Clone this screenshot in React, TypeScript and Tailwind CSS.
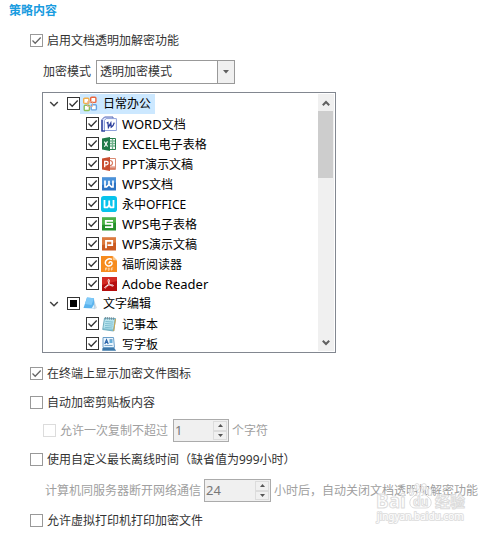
import { useState } from "react";
import type { ReactNode } from "react";
import { clsx } from "clsx";

type CheckboxTone = "form" | "tree";

type CheckboxProps = {
  readonly checked: boolean;
  readonly onChange?: (checked: boolean) => void;
  readonly label: ReactNode;
  readonly tone?: CheckboxTone;
  readonly partial?: boolean;
  readonly disabled?: boolean;
};

type TreeItem = {
  readonly id: string;
  readonly label: string;
  readonly prefix?: string;
  readonly icon: ReactNode;
};

type TreeGroup = TreeItem & {
  readonly partial?: boolean;
  readonly items: readonly TreeItem[];
};

const Icon = ({ children }: { readonly children: ReactNode }) => (
  <svg viewBox="0 0 16 16" className="h-4 w-4 shrink-0" aria-hidden="true">
    {children}
  </svg>
);

const OfficeIcon = () => (
  <Icon>
    <g fill="#fff" strokeWidth="1.4">
      <rect x="1.700" y="2.200" width="5.200" height="5.200" rx="1" stroke="#f3ae4b" />
      <rect x="8.700" y="1.200" width="5.200" height="5.200" rx="1" stroke="#e9663f" />
      <rect x="2.200" y="9.300" width="5.200" height="5.200" rx="1" stroke="#8cc05a" />
      <rect x="9.200" y="8.700" width="5.200" height="5.200" rx="1" stroke="#6aa5e2" />
    </g>
    <path d="M5.500 5.500h5v5h-5z" fill="none" stroke="#e9a98c" strokeWidth=".8" />
  </Icon>
);

const WordIcon = () => (
  <Icon>
    <path d="M1 15V3.5L3.5 1H12v2" fill="#dfe6fa" stroke="#5364b5" />
    <path d="M3.5 14.5v-10l1.6-1.9h10.3v11.9z" fill="#fff" stroke="#8fa0da" />
    <path d="M1 4v11h3" fill="none" stroke="#3348a0" strokeWidth="1.4" />
    <path d="M5.6 7l1.3-.5.5 4.8L9.800 7l.4 4.200c1.500-1 2.600-2.400 3.100-4.500" fill="none" stroke="#2c3f9c" strokeWidth="1.3" />
  </Icon>
);

const ExcelIcon = () => (
  <Icon>
    <path d="M8.5 2.5h6v11h-6z" fill="#fff" stroke="#237b4b" />
    <path d="M9 5h5M9 7.5h5M9 10h5M11.5 3v10" stroke="#72b58e" strokeWidth="1.3" />
    <path d="M1 2.4L9 1v14l-8-1.4z" fill="#1f7a49" />
    <path d="M3.300 5.700l3.300 4.800M6.500 5.400L3.400 10.700" stroke="#fff" strokeWidth="1.2" />
  </Icon>
);

const PowerPointIcon = () => (
  <Icon>
    <path d="M8.5 2.5h6v11h-6z" fill="#fff" stroke="#d98a72" />
    <path d="M9 4.5a2.5 2.5 0 1 1 0 5M9 11h5M9 12.4h5" fill="none" stroke="#d97b61" strokeWidth="1.2" />
    <path d="M1 2.4L9 1v14l-8-1.4z" fill="#c84d2e" />
    <path d="M3.7 11.2V5.3h1.7a1.7 1.7 0 0 1 0 3.5H3.9" fill="none" stroke="#fff" strokeWidth="1.3" />
  </Icon>
);

const WpsWriterIcon = () => (
  <Icon>
    <rect x="1" y="1.5" width="14" height="13" fill="#2c73c3" />
    <path d="M1 1.5h14v5L1 9z" fill="#4a92da" />
    <path d="M4 4.5v6.3h1.6L8 8.4l2.4 2.4H12V4.5M8 4.7v3.5" fill="none" stroke="#fff" strokeWidth="1.7" />
  </Icon>
);

const YozoIcon = () => (
  <Icon>
    <rect width="16" height="16" rx="2.8" fill="#08c3ec" />
    <path d="M3.5 4v7.3h3.1L8.2 9l1.2 2.3h3.1V4M8.2 4.5v4" fill="none" stroke="#fff" strokeWidth="1.8" strokeLinejoin="round" />
  </Icon>
);

const WpsSheetIcon = () => (
  <Icon>
    <rect x="1" y="1.5" width="14" height="13" fill="#25912b" />
    <path d="M1 1.5h14v5L1 9z" fill="#4cb247" />
    <path d="M12 4.8H4.8v3.1h6.4v3.3H4" fill="none" stroke="#fff" strokeWidth="1.8" />
  </Icon>
);

const WpsSlideIcon = () => (
  <Icon>
    <rect x="1" y="1.5" width="14" height="13" fill="#cb5a20" />
    <path d="M1 1.5h14v5L1 9z" fill="#dc7a3d" />
    <path d="M5 12.3V4.8h6.2v4.4H6.5" fill="none" stroke="#fff" strokeWidth="1.8" />
  </Icon>
);

const FoxitIcon = () => (
  <Icon>
    <path d="M0 0h11.5L16 4.5V16H0z" fill="#f68b1e" />
    <path d="M11.8 0L16 4.2h-4.2z" fill="#fbc98c" />
    <path d="M11 3.4C7.2 1.8 4 4.2 4.3 7c.3 2.6 3.4 3.8 5.6 2.4 1.6-1 1.5-3.3 0-3.6-1.5-.2-2.2 1-1.6 1.9" fill="none" stroke="#fff" strokeWidth="1.5" />
    <path d="M4.5 14.5v-2.6h1.2v1.3H4.6M7.3 12v2.3h.9l.5-.6v-1.3l-.5-.4zM10.5 14.5v-2.6h1.7m-1.6 1.3h1.3" fill="none" stroke="#ffe6c8" strokeWidth=".7" />
  </Icon>
);

const AdobeIcon = () => (
  <Icon>
    <rect x="1" y="1" width="15" height="14" fill="#b50d0d" />
    <path d="M1 1h15v4L1 9z" fill="#d32b24" />
    <path
      d="M7.6 3.4c1.5 0 .7 3-.5 5.1-1.2 2.2-2.4 3.8-3.2 3.5-.9-.5.9-2.2 3.4-2.8 2.6-.6 5-.5 5.1.4.1 1-2.3.4-3.8-1.3C7.2 6.7 6.6 3.5 7.6 3.4z"
      fill="none"
      stroke="#fff"
      strokeWidth=".9"
    />
  </Icon>
);

const NotesIcon = () => (
  <Icon>
    <path d="M11.500 2.500l3.500 9.500-3 1.500-1-2z" fill="#d5dce2" />
    <path d="M5 1.500l7 .7.500 10.300-11-.5z" fill="#5cb4ee" />
    <path d="M5 1.500l7 .7L9.500 9 3 8z" fill="#80caf8" />
    <path d="M9.500 12.500l2.500-4 .5 4z" fill="#e6f4fd" />
  </Icon>
);

const NotepadIcon = () => (
  <Icon>
    <path d="M3.5 2l11 .5-1.800 12.500-11-1.500z" fill="#89c7d8" stroke="#5d9fb4" strokeWidth=".8" />
    <path d="M4 3l9.500.6L12 13l-9.500-1z" fill="#b9e5ee" />
    <path d="M4.5 5.5l7.700.6M4.200 7.500l7.700.6M4 9.500l7.700.6M3.700 11.300l7.700.7" stroke="#6eb2c8" strokeWidth=".8" />
    <path d="M4.5 1v2.500M6.500 1v2.500M8.500 1.200v2.500M10.500 1.300v2.500M12.500 1.400v2.500" stroke="#738791" strokeWidth=".8" />
    <path d="M14.5 3l-1.800 12" stroke="#d2a64c" />
  </Icon>
);

const WordpadIcon = () => (
  <Icon>
    <path d="M2 1.500h10.500l1 10H2z" fill="#eaf5fd" stroke="#6b9fc9" />
    <path d="M1.500 12h11.800l1.800 2.800H1.200z" fill="#3c78aa" />
    <path d="M3.800 8l1.700-4.200L7.200 8M4.500 6.500h2" fill="none" stroke="#2762a8" strokeWidth="1.200" />
    <path d="M8.500 7h3v-3h-3z" fill="#65add8" />
    <path d="M3.500 9.500h8M8.500 3.500h3" stroke="#81aaca" />
  </Icon>
);

const TREE: readonly TreeGroup[] = [
  {
    id: "office",
    label: "日常办公",
    icon: <OfficeIcon />,
    items: [
      { id: "word", prefix: "WORD", label: "文档", icon: <WordIcon /> },
      { id: "excel", prefix: "EXCEL", label: "电子表格", icon: <ExcelIcon /> },
      { id: "ppt", prefix: "PPT", label: "演示文稿", icon: <PowerPointIcon /> },
      { id: "wps", prefix: "WPS", label: "文档", icon: <WpsWriterIcon /> },
      { id: "yozo", label: "永中OFFICE", icon: <YozoIcon /> },
      { id: "et", prefix: "WPS", label: "电子表格", icon: <WpsSheetIcon /> },
      { id: "wpp", prefix: "WPS", label: "演示文稿", icon: <WpsSlideIcon /> },
      { id: "foxit", label: "福昕阅读器", icon: <FoxitIcon /> },
      { id: "adobe", prefix: "Adobe Reader", label: "", icon: <AdobeIcon /> },
    ],
  },
  {
    id: "text",
    label: "文字编辑",
    icon: <NotesIcon />,
    partial: true,
    items: [
      { id: "notepad", label: "记事本", icon: <NotepadIcon /> },
      { id: "wordpad", label: "写字板", icon: <WordpadIcon /> },
    ],
  },
];

const Checkbox = ({
  checked,
  onChange,
  label,
  tone = "form",
  partial = false,
  disabled = false,
}: CheckboxProps) => {
  const isTree = tone === "tree";

  return (
    <label className={clsx("flex items-center", !isTree && "gap-1", disabled && "text-[#a0a0a0]")}>
      <span className={clsx("grid h-[13px] w-[13px] shrink-0", isTree && "mb-px")}>
        <input
          type="checkbox"
          checked={checked}
          disabled={disabled}
          onChange={(event) => onChange?.(event.target.checked)}
          className={clsx(
            "col-start-1 row-start-1 h-[13px] w-[13px] appearance-none border bg-white",
            isTree ? "border-[#333333]" : "border-[#999999] disabled:border-[#dcdcdc]",
          )}
        />
        {checked && !partial && (
          <svg viewBox="0 0 13 13" className="pointer-events-none col-start-1 row-start-1 h-[13px] w-[13px]">
            <path d="M2.5 6.5L5.2 9.2L10.7 3.5" fill="none" stroke={isTree ? "#333" : "#666"} strokeWidth="1.3" />
          </svg>
        )}
        {partial && (
          <span className="pointer-events-none col-start-1 row-start-1 h-[7px] w-[7px] place-self-center bg-black" />
        )}
      </span>
      {label}
    </label>
  );
};

const NumberBox = ({
  label,
  defaultValue,
  className,
}: {
  readonly label: string;
  readonly defaultValue: number;
  readonly className: string;
}) => (
  <span className={clsx("flex h-[23px] border border-[#ababab] bg-[#f0f0f0] p-px", className)}>
    <input
      type="text"
      inputMode="numeric"
      aria-label={label}
      defaultValue={defaultValue}
      disabled
      className="h-[18px] min-w-0 flex-1 bg-transparent text-[13px] leading-4 text-[#777777]"
    />
    <span className="flex w-[14px] flex-col">
      <button type="button" disabled aria-label="增加" className="flex flex-1 items-center justify-center border border-[#dcdcdc]">
        <svg viewBox="0 0 5 3" className="h-[3px] w-[5px]">
          <path d="M0 3L2.5 0L5 3z" fill="#555" />
        </svg>
      </button>
      <button type="button" disabled aria-label="减少" className="flex flex-1 items-center justify-center border border-[#dcdcdc]">
        <svg viewBox="0 0 5 3" className="h-[3px] w-[5px]">
          <path d="M0 0L2.5 3L5 0z" fill="#555" />
        </svg>
      </button>
    </span>
  </span>
);

const ScrollBar = () => (
  <div className="flex w-4 flex-col bg-[#f0f0f0]">
    <button type="button" aria-label="向上滚动" className="flex h-[17px] shrink-0 items-center justify-center">
      <svg viewBox="0 0 8 6" className="h-[6px] w-2">
        <path d="M.8 5.2L4 2L7.2 5.2" fill="none" stroke="#606060" strokeWidth="2" />
      </svg>
    </button>
    <div className="flex-1">
      <div className="h-[67px] w-[15px] bg-[#cdcdcd]" />
    </div>
    <button type="button" aria-label="向下滚动" className="flex h-[17px] shrink-0 items-center justify-center">
      <svg viewBox="0 0 8 6" className="h-[6px] w-2">
        <path d="M.8 .8L4 4L7.2 .8" fill="none" stroke="#606060" strokeWidth="2" />
      </svg>
    </button>
  </div>
);

const AppTree = () => {
  const [unchecked, setUnchecked] = useState<readonly string[]>([]);
  const [selected] = useState("office");

  const toggle = (id: string, checked: boolean) => {
    setUnchecked(checked ? unchecked.filter((other) => other !== id) : [...unchecked, id]);
  };

  return (
    <div className="ml-[42px] mt-2 flex h-[261px] max-w-[294px] overflow-hidden border border-[#828790] p-px text-black">
      <ul className="min-w-0 flex-1">
        {TREE.map((group) => (
          <li key={group.id}>
            <div className="flex h-5 items-center pl-[5px]">
              <button type="button" aria-label={`折叠${group.label}`} className="mr-2 flex w-[10px] justify-center">
                <svg viewBox="0 0 10 6" className="h-[6px] w-[10px]">
                  <path d="M1.2 1L5 4.8L8.8 1" fill="none" stroke="#404040" strokeWidth="1.5" />
                </svg>
              </button>
              <Checkbox
                tone="tree"
                checked={!unchecked.includes(group.id)}
                partial={group.partial}
                onChange={(checked) => toggle(group.id, checked)}
                label={
                  <span
                    className={clsx(
                      "flex h-5 items-center gap-[5px] pl-0.5 pr-1",
                      group.id === selected && "bg-[#cce8ff]",
                    )}
                  >
                    {group.icon}
                    {group.label}
                  </span>
                }
              />
            </div>
            <ul>
              {group.items.map((item) => (
                <li key={item.id} className="flex h-5 items-center pl-[42px]">
                  <Checkbox
                    tone="tree"
                    checked={!unchecked.includes(item.id)}
                    onChange={(checked) => toggle(item.id, checked)}
                    label={
                      <span className="flex items-center gap-[5px] pl-0.5">
                        {item.icon}
                        <span>
                          <span className="text-[13px]">{item.prefix}</span>
                          {item.label}
                        </span>
                      </span>
                    }
                  />
                </li>
              ))}
            </ul>
          </li>
        ))}
      </ul>
      <ScrollBar />
    </div>
  );
};

const Watermark = () => (
  <svg
    viewBox="0 0 92 44"
    className="pointer-events-none absolute right-[11px] top-0 h-11 w-[92px]"
    aria-hidden="true"
  >
    <g fill="#fff" fillOpacity=".6" stroke="#dcdcdc" strokeWidth="1" strokeLinejoin="round">
      <text x="1" y="25" fontSize="19" fontWeight="700">
        Bai
      </text>
      <text x="60" y="24" fontSize="15" fontWeight="700">
        经验
      </text>
      <ellipse cx="36.500" cy="9" rx="2.500" ry="3.500" />
      <ellipse cx="42" cy="4" rx="2.500" ry="3.500" />
      <ellipse cx="49" cy="4" rx="2.500" ry="3.500" />
      <ellipse cx="54.500" cy="9" rx="2.500" ry="3.500" />
      <path d="M45.500 9c4 0 4.500 3 7.500 5 5 3 4 11-2 11h-11c-6 0-7-8-2-11 3-2 3.500-5 7.500-5z" />
      <text x="38" y="23" fontSize="12" fontWeight="700">
        du
      </text>
    </g>
    <text x="2" y="37" fontSize="10" fill="#fff" stroke="#e0e0e0" strokeWidth="2" strokeLinejoin="round" paintOrder="stroke">
      jingyan.baidu.com
    </text>
  </svg>
);

export default function App() {
  const [transparent, setTransparent] = useState(true);
  const [showIcon, setShowIcon] = useState(true);
  const [clipboard, setClipboard] = useState(false);
  const [offline, setOffline] = useState(false);
  const [printer, setPrinter] = useState(false);

  return (
    <main className="min-h-screen overflow-hidden whitespace-nowrap bg-white font-['Noto_Sans','Noto_Sans_CJK_SC',sans-serif] text-[12px] leading-4 text-[#333333]">
      <h1 className="flex h-[22px] items-center pl-[9px] font-bold text-[#1a9ce0]">策略内容</h1>

      <div className="mt-[7px] flex h-[23px] items-center pl-[30px]">
        <Checkbox checked={transparent} onChange={setTransparent} label="启用文档透明加解密功能" />
      </div>

      <div className="mt-2 flex h-6 items-center gap-[5px] pl-[43px]">
        <label htmlFor="mode">加密模式</label>
        <span className="grid h-6 w-[139px] grid-cols-[1fr_17px] border border-[#999999]">
          <select id="mode" className="col-span-2 col-start-1 row-start-1 appearance-none bg-white pl-[3px]">
            <option>透明加密模式</option>
          </select>
          <span className="pointer-events-none col-start-2 row-start-1 flex items-center justify-center border-l border-[#999999] bg-[#f0f0f0]">
            <svg viewBox="0 0 6 4" className="h-1 w-[6px]">
              <path d="M0 0h6L3 3.5z" fill="#606060" />
            </svg>
          </span>
        </span>
      </div>

      <AppTree />

      <div className="mt-[9px] flex h-[23px] items-center pl-[30px]">
        <Checkbox checked={showIcon} onChange={setShowIcon} label="在终端上显示加密文件图标" />
      </div>

      <div className="mt-1.5 flex h-[23px] items-center pl-[30px]">
        <Checkbox checked={clipboard} onChange={setClipboard} label="自动加密剪贴板内容" />
      </div>
      <div className="mt-[5px] flex h-[23px] items-center pl-[43px] text-[#a0a0a0]">
        <Checkbox checked={false} disabled label="允许一次复制不超过" />
        <NumberBox label="字符数" defaultValue={1} className="ml-[5px] mr-[3px] w-14" />
        个字符
      </div>

      <div className="mt-1.5 flex h-[23px] items-center pl-[30px]">
        <Checkbox checked={offline} onChange={setOffline} label="使用自定义最长离线时间（缺省值为999小时）" />
      </div>
      <div className="mt-2 flex h-[23px] items-center pl-[45px] text-[#a0a0a0]">
        计算机同服务器断开网络通信
        <NumberBox label="离线小时数" defaultValue={24} className="ml-[3px] mr-[3px] w-[67px]" />
        <span className="relative">
          小时后，自动关闭文档透明加解密功能
          <Watermark />
        </span>
      </div>

      <div className="mt-[7px] flex h-[23px] items-center pl-[30px]">
        <Checkbox checked={printer} onChange={setPrinter} label="允许虚拟打印机打印加密文件" />
      </div>
    </main>
  );
}
